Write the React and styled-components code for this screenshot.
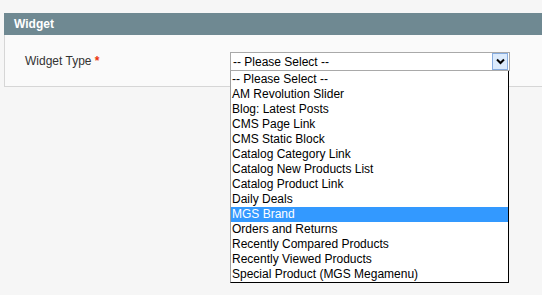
import React from "react";
import styled, { createGlobalStyle } from "styled-components";

const GlobalStyle = createGlobalStyle`
  html {
    overflow: hidden;
  }
  body {
    margin: 0;
    padding: 0;
    background: #f6f6f6;
    font-family: "Liberation Sans", Arial, sans-serif;
    font-size: 12px;
  }
`;

const widgetTypes = [
  "-- Please Select --",
  "AM Revolution Slider",
  "Blog: Latest Posts",
  "CMS Page Link",
  "CMS Static Block",
  "Catalog Category Link",
  "Catalog New Products List",
  "Catalog Product Link",
  "Daily Deals",
  "MGS Brand",
  "Orders and Returns",
  "Recently Compared Products",
  "Recently Viewed Products",
  "Special Product (MGS Megamenu)",
];

export default function App() {
  return (
    <>
      <GlobalStyle />
      <Page>
        <Fieldset>
          <Legend>Widget</Legend>
          <Panel>
            <Row>
              <Label>
                Widget Type <Required>*</Required>
              </Label>
              <SelectWrap>
                <Select>
                  <SelectValue>-- Please Select --</SelectValue>
                  <ArrowButton>
                    <svg width="9" height="7" viewBox="0 0 9 7">
                      <path
                        d="M1 1.5 L4.5 5 L8 1.5"
                        fill="none"
                        stroke="#000"
                        strokeWidth="2"
                      />
                    </svg>
                  </ArrowButton>
                </Select>
                <Dropdown>
                  {widgetTypes.map((t) => (
                    <Option key={t} $active={t === "MGS Brand"}>
                      {t}
                    </Option>
                  ))}
                </Dropdown>
              </SelectWrap>
            </Row>
          </Panel>
        </Fieldset>
      </Page>
    </>
  );
}

const Page = styled.div`
  box-sizing: border-box;
  min-height: 295px;
  padding: 13px 0 0 4px;
  width: 560px;
`;

const Fieldset = styled.div`
  display: flex;
  flex-direction: column;
`;

const Legend = styled.div`
  height: 22px;
  line-height: 22px;
  background: #6f8992;
  color: #fff;
  font-weight: 700;
  font-size: 12px;
  padding-left: 10px;
`;

const Panel = styled.div`
  background: #fafafa;
  border: 1px solid #d6d6d6;
  border-top: none;
  padding: 17px 0 15px 20px;
`;

const Row = styled.div`
  display: grid;
  grid-template-columns: 205px 280px;
  align-items: center;
`;

const Label = styled.label`
  color: #333;
  font-size: 12px;
  padding-bottom: 1px;
`;

const Required = styled.span`
  color: #eb340a;
  font-weight: 700;
`;

const SelectWrap = styled.div`
  position: relative;
`;

const Select = styled.div`
  box-sizing: border-box;
  height: 19px;
  border: 1px solid #a9a9a9;
  background: #fff;
  display: flex;
  align-items: center;
  justify-content: space-between;
  padding: 0 1px 0 2px;
`;

const SelectValue = styled.span`
  color: #000;
  font-size: 12px;
`;

const ArrowButton = styled.span`
  box-sizing: border-box;
  width: 16px;
  height: 17px;
  background: #dcebfc;
  border: 1px solid #86ace0;
  display: flex;
  align-items: center;
  justify-content: center;
`;

const Dropdown = styled.div`
  position: absolute;
  top: 19px;
  left: 0;
  width: 279px;
  box-sizing: border-box;
  padding-top: 1px;
  background: #fff;
  border-left: 1px solid #a0a0a0;
  border-right: 1px solid #000;
  border-bottom: 1px solid #000;
  display: flex;
  flex-direction: column;
`;

const Option = styled.div`
  height: 15px;
  line-height: 15px;
  padding-left: 1px;
  font-size: 12px;
  color: ${(p) => (p.$active ? "#fff" : "#000")};
  background: ${(p) => (p.$active ? "#3399ff" : "transparent")};
  white-space: nowrap;
`;
